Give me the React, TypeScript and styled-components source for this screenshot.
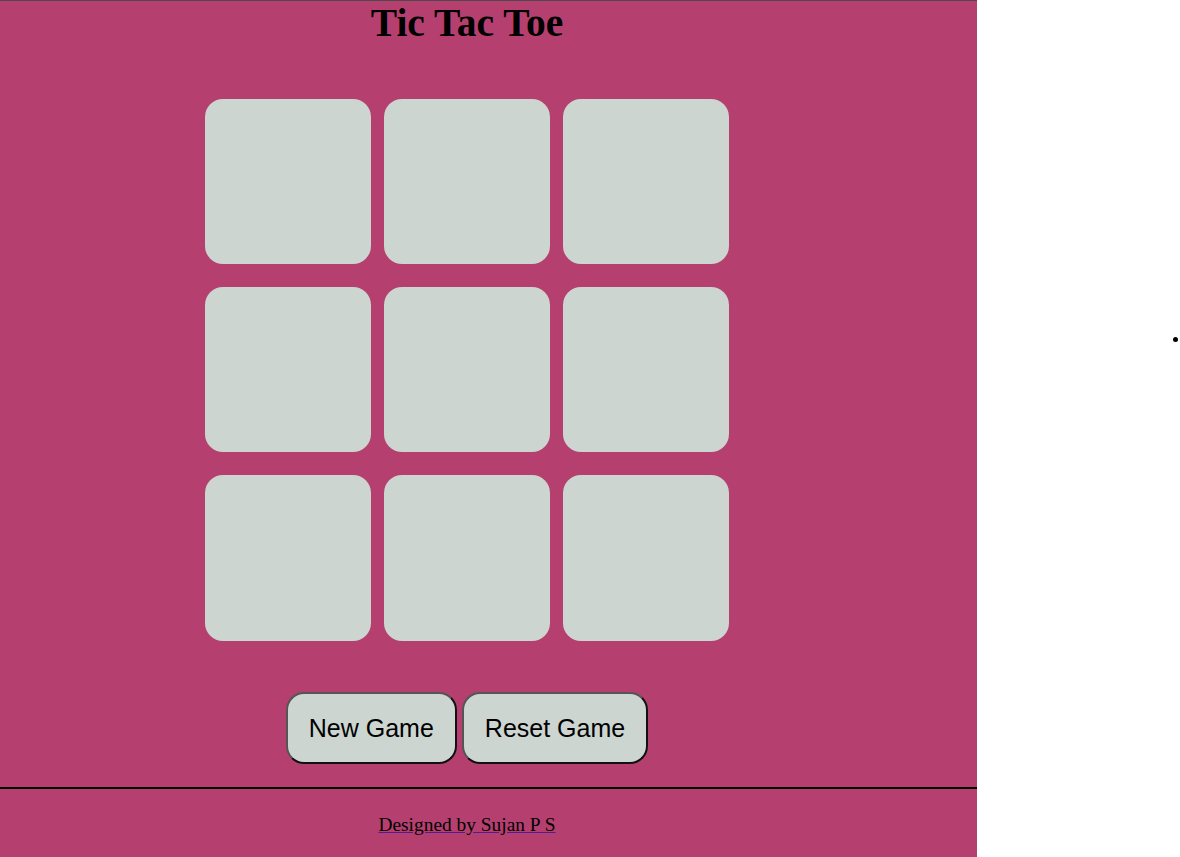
import React from 'react'
import styled, { createGlobalStyle } from 'styled-components'

const GlobalStyle = createGlobalStyle`
  html, body {
    margin: 0;
    padding: 0;
    background: #ffffff;
  }
`

const Page = styled.div`
  display: flex;
  flex-direction: row;
  min-height: 857px;
`

const Board = styled.main`
  width: 977px;
  min-height: 857px;
  background: #b54070;
  border-top: 1px solid #4a4a4a;
  box-sizing: border-box;

  display: flex;
  flex-direction: column;
  font-family: "Liberation Serif", "Times New Roman", serif;
`

const Content = styled.div`
  width: 934px;
  display: flex;
  flex-direction: column;
  align-items: center;
`

const Title = styled.h1`
  margin: 0;
  font-size: 39.5px;
  line-height: 44px;
  font-weight: bold;
  color: #000;
`

const Grid = styled.div`
  margin-top: 54px;
  display: grid;
  grid-template-columns: repeat(3, 166px);
  grid-template-rows: 165px 165px 166px;
  column-gap: 13px;
  row-gap: 23px;
`

const Cell = styled.button`
  border: none;
  border-radius: 18px;
  background: #ccd5d0;
  padding: 0;
  cursor: pointer;
`

const Controls = styled.div`
  margin-top: 51px;
  display: flex;
  gap: 5px;
`

const ActionButton = styled.button`
  font-family: "Liberation Sans", Arial, sans-serif;
  font-size: 25px;
  font-weight: 400;
  color: #000;
  background: #ccd5d0;
  padding: 20px 21px 19px;
  border: 2px solid;
  border-color: #555 #111 #111 #555;
  border-radius: 18px;
  cursor: pointer;
`

const Footer = styled.footer`
  margin-top: 23px;
  border-top: 2px solid #000;
  display: flex;
  justify-content: flex-start;
  width: 977px;
`

const FooterInner = styled.div`
  width: 934px;
  display: flex;
  justify-content: center;
  padding-top: 25px;
`

const Credit = styled.a`
  font-size: 19.4px;
  color: #000;
  text-decoration: underline;
  text-decoration-color: #551a8b;
`

const Side = styled.aside`
  flex: 1;
  display: flex;
  justify-content: flex-end;
  align-items: flex-start;
  padding-top: 337px;
  padding-right: 2px;
`

const Dot = styled.span`
  width: 5px;
  height: 5px;
  border-radius: 50%;
  background: #000;
`

export default function App() {
  const cells = Array.from({ length: 9 }, (_, i) => i)
  return (<>
    <GlobalStyle />
    <Page>
      <Board>
        <Content>
          <Title>Tic Tac Toe</Title>
          <Grid>
            {cells.map(i => <Cell key={i} />)}
          </Grid>
          <Controls>
            <ActionButton>New Game</ActionButton>
            <ActionButton>Reset Game</ActionButton>
          </Controls>
        </Content>
        <Footer>
          <FooterInner>
            <Credit href="#">Designed by Sujan P S</Credit>
          </FooterInner>
        </Footer>
      </Board>
      <Side>
        <Dot />
      </Side>
    </Page>
  </>)
}
